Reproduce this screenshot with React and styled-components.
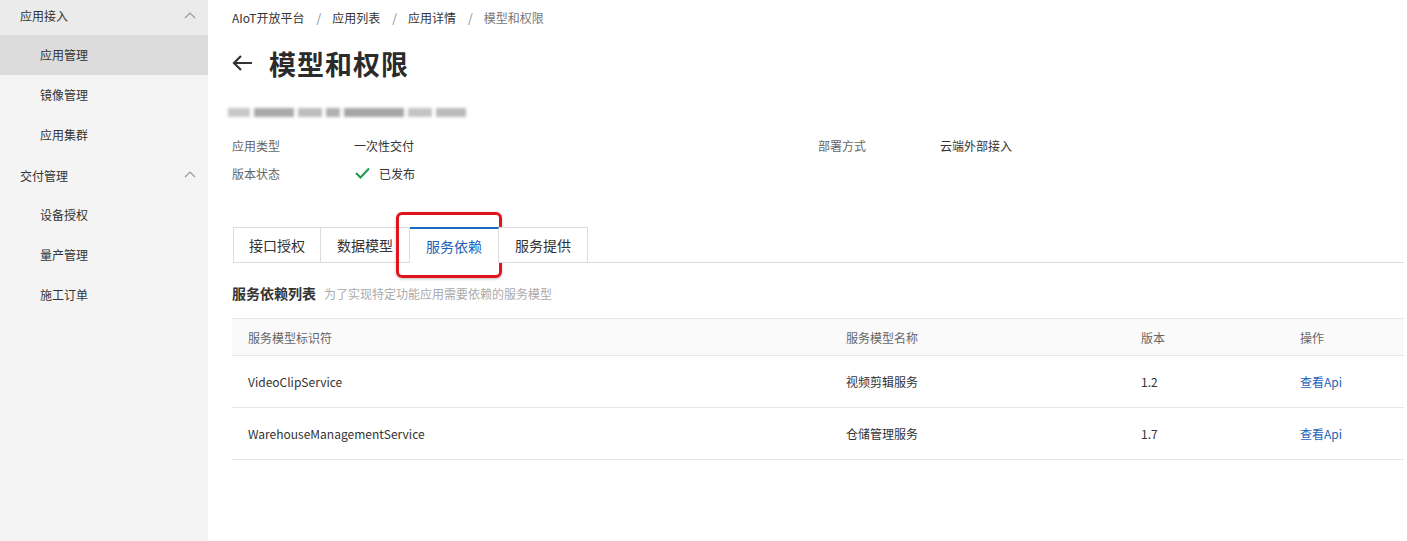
import React from 'react'
import styled, { createGlobalStyle } from 'styled-components'

const Global = createGlobalStyle`
  body {
    margin: 0;
    font-family: "Noto Sans CJK SC", "Noto Sans", sans-serif;
    color: #333;
    background: #fff;
  }
`

const menu = [
  { title: '应用接入', items: ['应用管理', '镜像管理', '应用集群'], top: true },
  { title: '交付管理', items: ['设备授权', '量产管理', '施工订单'] },
]

const rows = [
  { id: 'VideoClipService', name: '视频剪辑服务', ver: '1.2' },
  { id: 'WarehouseManagementService', name: '仓储管理服务', ver: '1.7' },
]

const tabs = ['接口授权', '数据模型', '服务依赖', '服务提供']

function App() {
  return (
    <Page>
      <Global />
      <Sidebar>
        {menu.map((g, i) => (
          <div key={i}>
            <GroupHead first={g.top}>
              <span>{g.title}</span>
              <svg width="12" height="8" viewBox="0 0 12 8">
                <polyline points="1,7 6,2 11,7" fill="none" stroke="#999" strokeWidth="1.2" />
              </svg>
            </GroupHead>
            {g.items.map((it) => (
              <MenuItem key={it} active={it === '应用管理'}>{it}</MenuItem>
            ))}
          </div>
        ))}
      </Sidebar>

      <Main>
        <Crumbs>
          <span>AIoT开放平台</span><Sep>/</Sep>
          <span>应用列表</span><Sep>/</Sep>
          <span>应用详情</span><Sep>/</Sep>
          <Current>模型和权限</Current>
        </Crumbs>

        <TitleRow>
          <svg width="21" height="16" viewBox="0 0 21 16">
            <path d="M20 8H2M9 1L2 8l7 7" fill="none" stroke="#333" strokeWidth="2.2" />
          </svg>
          <h1>模型和权限</h1>
        </TitleRow>

        <Blurred>
          <Blob w={22} c="#c8c8c8" />
          <Blob w={40} c="#a9a9a9" />
          <Blob w={24} c="#bdbdbd" />
          <Blob w={14} c="#b0b0b0" />
          <Blob w={60} c="#a6a6a6" />
          <Blob w={24} c="#c4c4c4" />
          <Blob w={30} c="#bababa" />
        </Blurred>

        <Info>
          <Label>应用类型</Label>
          <Value>一次性交付</Value>
          <Label>部署方式</Label>
          <Value>云端外部接入</Value>
          <Label>版本状态</Label>
          <Value>
            <svg width="15" height="12" viewBox="0 0 15 12">
              <polyline points="1,6 5.5,10.5 14,1.5" fill="none" stroke="#1e9a4e" strokeWidth="2" />
            </svg>
            已发布
          </Value>
        </Info>

        <TabBar>
          {tabs.map((t) => (
            <Tab key={t} active={t === '服务依赖'}>
              {t}
              {t === '服务依赖' && <Highlight />}
            </Tab>
          ))}
          <TabRest />
        </TabBar>

        <SectionTitle>
          服务依赖列表<small>为了实现特定功能应用需要依赖的服务模型</small>
        </SectionTitle>

        <Table>
          <thead>
            <tr>
              <Th w={598}>服务模型标识符</Th>
              <Th w={295}>服务模型名称</Th>
              <Th w={159}>版本</Th>
              <Th>操作</Th>
            </tr>
          </thead>
          <tbody>
            {rows.map((r) => (
              <tr key={r.id}>
                <Td>{r.id}</Td>
                <Td>{r.name}</Td>
                <Td>{r.ver}</Td>
                <Td><Link>查看Api</Link></Td>
              </tr>
            ))}
          </tbody>
        </Table>
      </Main>
    </Page>
  )
}

export default App

const Page = styled.div`
  display: flex;
  min-height: 541px;
`

const Sidebar = styled.div`
  width: 208px;
  flex-shrink: 0;
  background: #f4f4f4;
`

const GroupHead = styled.div`
  height: ${p => (p.first ? '35px' : '40px')};
  box-sizing: border-box;
  padding: ${p => (p.first ? '0 12px 4px 20px' : '0 12px 0 20px')};
  display: flex;
  align-items: center;
  justify-content: space-between;
  font-size: 12px;
  color: #333;
  background: ${p => (p.first ? '#ebebeb' : '#f4f4f4')};
  svg { margin-top: -2px; }
`

const MenuItem = styled.div`
  height: 40px;
  line-height: 40px;
  padding-left: 40px;
  font-size: 12px;
  color: #333;
  background: ${p => (p.active ? '#dcdcdc' : 'transparent')};
`

const Main = styled.div`
  flex: 1;
  padding: 8px 3px 0 24px;
`

const Crumbs = styled.div`
  font-size: 12px;
  line-height: 20px;
  color: #333;
`

const Sep = styled.span`
  margin: 0 11px 0 12px;
  color: #888;
`

const Current = styled.span`
  color: #777;
`

const TitleRow = styled.div`
  display: flex;
  align-items: center;
  height: 40px;
  margin-top: 15px;
  svg { margin-right: 16px; }
  h1 {
    margin: 0;
    font-size: 27px;
    font-weight: 700;
    color: #2b2b2b;
    letter-spacing: 1px;
  }
`

const Blurred = styled.div`
  display: flex;
  gap: 4px;
  margin: 21px 0 0 -4px;
  height: 16px;
  align-items: center;
  filter: blur(1.6px);
`

const Blob = styled.span`
  width: ${p => p.w}px;
  height: 9px;
  background: ${p => p.c};
`

const Info = styled.div`
  display: grid;
  grid-template-columns: 122px 464px 122px 1fr;
  grid-auto-rows: 28px;
  margin-top: 11px;
  font-size: 12px;
  align-items: center;
`

const Label = styled.div`
  color: #666;
`

const Value = styled.div`
  color: #333;
  display: flex;
  align-items: center;
  gap: 9px;
  svg { margin-left: 1px; }
`

const TabBar = styled.div`
  display: flex;
  margin-top: 40px;
  padding-left: 1px;
`

const Tab = styled.div`
  position: relative;
  height: 36px;
  box-sizing: border-box;
  padding: 0 16px;
  display: flex;
  align-items: center;
  font-size: 14px;
  color: ${p => (p.active ? '#1b62b8' : '#333')};
  background: #fff;
  border: 1px solid #dcdcdc;
  border-left: none;
  border-top: ${p => (p.active ? '2px solid #1b6ac0' : '1px solid #dcdcdc')};
  border-bottom: ${p => (p.active ? '1px solid #fff' : '1px solid #dcdcdc')};
  &:first-child {
    border-left: 1px solid #dcdcdc;
    padding: 0 15px;
  }
`

const Highlight = styled.span`
  position: absolute;
  left: -14px;
  top: -17px;
  width: 106px;
  height: 66px;
  box-sizing: border-box;
  border: 3px solid #e0141c;
  border-radius: 6px;
  box-shadow: 0 1px 3px rgba(0, 0, 0, 0.25);
`

const TabRest = styled.div`
  flex: 1;
  border-bottom: 1px solid #dcdcdc;
`

const SectionTitle = styled.div`
  margin-top: 20px;
  font-size: 14px;
  font-weight: 700;
  color: #333;
  line-height: 20px;
  small {
    margin-left: 8px;
    font-size: 12px;
    font-weight: 400;
    color: #aaa;
  }
`

const Table = styled.table`
  width: 100%;
  margin-top: 14px;
  border-collapse: collapse;
  table-layout: fixed;
  font-size: 12px;
`

const Th = styled.th`
  width: ${p => (p.w ? `${p.w}px` : 'auto')};
  box-sizing: border-box;
  height: 37px;
  padding: 0 16px;
  text-align: left;
  font-weight: 400;
  color: #666;
  background: #fafafa;
  border-top: 1px solid #e8e8e8;
  border-bottom: 1px solid #e8e8e8;
`

const Td = styled.td`
  height: 51px;
  padding: 0 16px;
  color: #333;
  border-bottom: 1px solid #e8e8e8;
`

const Link = styled.span`
  color: #1b62b8;
`
